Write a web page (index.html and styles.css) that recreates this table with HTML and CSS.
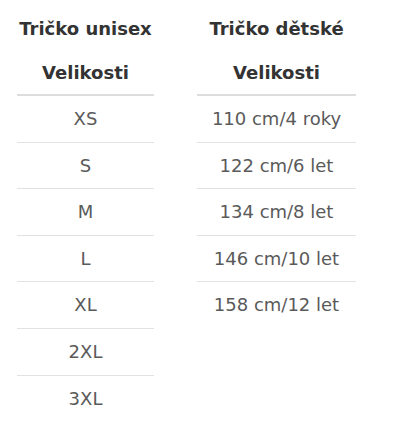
FILE: index.html
```html
<!DOCTYPE html>
<html lang="cs">
<head>
<meta charset="utf-8">
<link rel="stylesheet" href="styles.css">
</head>
<body>
<div class="wrap">
  <section class="block block-left">
    <h3 class="title">Tričko unisex</h3>
    <table class="sizes">
      <thead><tr><th>Velikosti</th></tr></thead>
      <tbody>
        <tr><td>XS</td></tr>
        <tr><td>S</td></tr>
        <tr><td>M</td></tr>
        <tr><td>L</td></tr>
        <tr><td>XL</td></tr>
        <tr><td>2XL</td></tr>
        <tr><td>3XL</td></tr>
      </tbody>
    </table>
  </section>
  <section class="block block-right">
    <h3 class="title">Tričko dětské</h3>
    <table class="sizes">
      <thead><tr><th>Velikosti</th></tr></thead>
      <tbody>
        <tr><td>110 cm/4 roky</td></tr>
        <tr><td>122 cm/6 let</td></tr>
        <tr><td>134 cm/8 let</td></tr>
        <tr><td>146 cm/10 let</td></tr>
        <tr><td>158 cm/12 let</td></tr>
      </tbody>
    </table>
  </section>
</div>
</body>
</html>
```
FILE: styles.css
```css
html, body {
  margin: 0;
  padding: 0;
  background: #fff;
}
body {
  font-family: "DejaVu Sans", "Open Sans", sans-serif;
  color: #333;
}
.wrap {
  display: flex;
  align-items: flex-start;
  gap: 43px;
  padding: 0 0 0 17px;
}
.block-left { width: 137px; }
.block-right { width: 159px; }
.title {
  margin: 0;
  padding-top: 17px;
  height: 40px;
  font-size: 18px;
  font-weight: 700;
  line-height: 24px;
  text-align: center;
  color: #333;
  box-sizing: border-box;
  white-space: nowrap;
}
.sizes {
  width: 100%;
  border-collapse: collapse;
}
.sizes th {
  font-size: 18px;
  font-weight: 700;
  line-height: 24px;
  padding: 21px 0 9px;
  color: #333;
  border-bottom: 2px solid #ddd;
  text-align: center;
}
.sizes td {
  font-size: 18px;
  font-weight: 400;
  line-height: 23.6px;
  padding: 11px 0;
  color: #5a5a5a;
  text-align: center;
  border-bottom: 1px solid #e2e2e2;
  white-space: nowrap;
}
.sizes tbody tr:last-child td {
  border-bottom: none;
}
```
